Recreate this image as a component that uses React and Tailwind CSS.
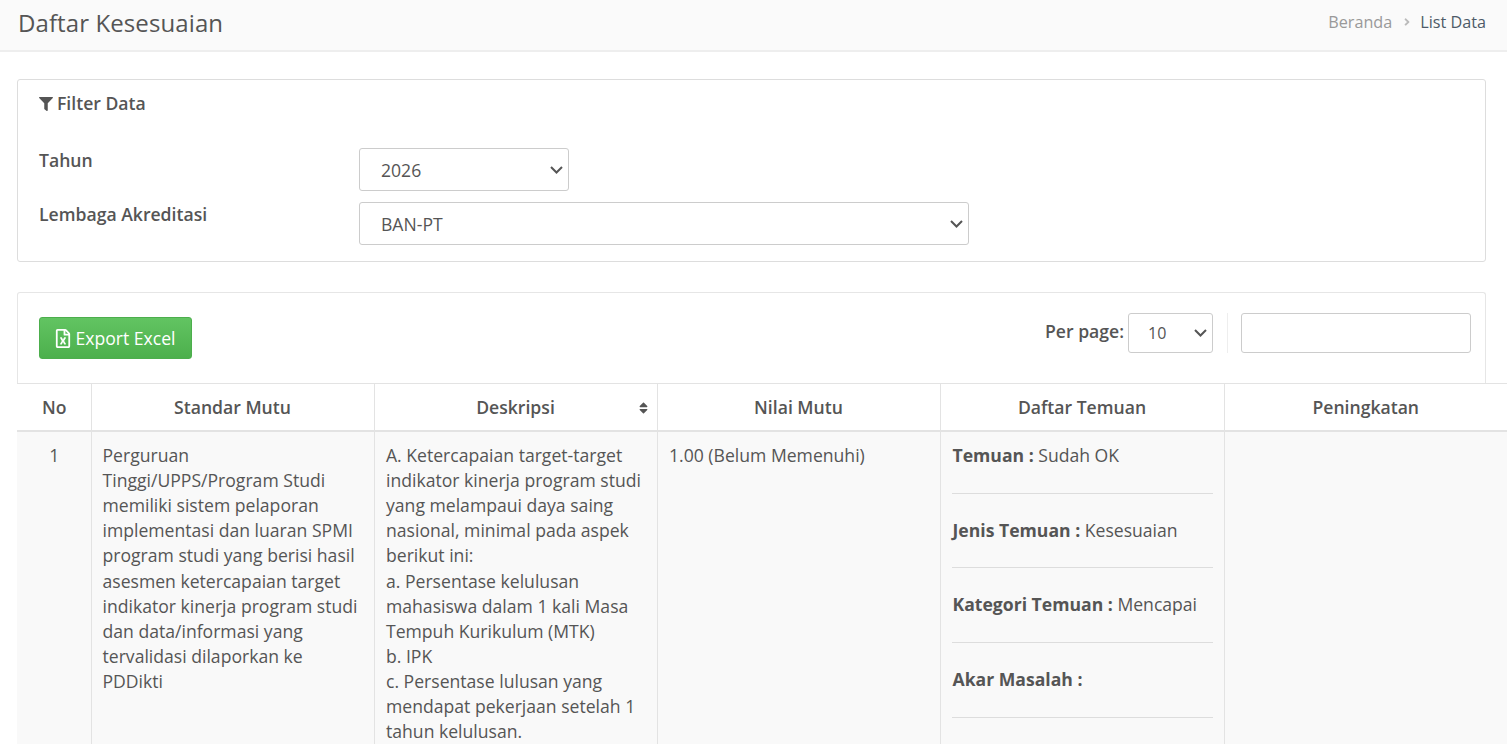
import React from "react";
import { FaFilter, FaRegFileExcel, FaSort, FaAngleRight } from "react-icons/fa";

function Hr() {
  return <div className="-mx-[1px] mt-[24.6px] mb-[23.96px] h-px bg-[#dddddd]" />;
}

function Chevron({ right }) {
  return (
    <svg viewBox="0 0 13 8" style={{ right }} className="pointer-events-none absolute top-1/2 h-[8px] w-[13px] -translate-y-1/2 text-[#555555]" fill="none" stroke="currentColor" strokeWidth="2">
      <path d="M1 1l5.5 5.5L12 1" />
    </svg>
  );
}

function Select({ w, h = "h-[43px]", pad, size, value, right = 6 }) {
  return (
    <div className={`relative ${w} ${h}`}>
      <select className={`h-full w-full appearance-none rounded-[3px] border border-[#cccccc] bg-white font-normal leading-none outline-none ${pad} ${size}`}>
        <option>{value}</option>
      </select>
      <Chevron right={right} />
    </div>
  );
}

export default function App() {
  return (
    <div className="h-screen w-full overflow-hidden bg-white font-['Open_Sans',sans-serif] text-[17.6px] leading-[25.14px] text-[#555555]">
      <header className="flex h-[52px] items-center justify-between border-b-2 border-[#eeeeee] bg-[#fafafa] pl-[18px] pr-[21px]">
        <h1 className="pb-[4px] text-[24px] leading-[30px] font-normal tracking-[0.1px]">Daftar Kesesuaian</h1>
        <nav className="flex items-center pb-[5px] text-[16.2px]">
          <span className="text-[#999999]">Beranda</span>
          <FaAngleRight className="ml-[9px] mr-[7px] size-[12px] text-[#bbbbbb]" />
          <span className="text-[#4d5a68]">List Data</span>
        </nav>
      </header>

      <main className="pl-[17px] pr-[21px] pt-[27px]">
        <section className="h-[183px] rounded-[3px] border border-[#dddddd] pl-[21px] pr-[16px] pt-[11px]">
          <div className="flex items-center gap-[4px] font-semibold">
            <FaFilter className="size-[14px]" />
            <span>Filter Data</span>
          </div>
          <div className="mt-[32px] grid grid-cols-[320px_1fr] gap-y-[11px] font-semibold">
            <label className="h-[43px]">Tahun</label>
            <Select w="w-[210px]" pad="pl-[21px] pt-[2px]" size="text-[17.6px]" value="2026" />
            <label className="h-[43px]">Lembaga Akreditasi</label>
            <Select w="w-[610px]" pad="pl-[21px] pt-[2px]" size="text-[17.6px]" value="BAN-PT" />
          </div>
        </section>

        <section className="mt-[30px] flex h-[91px] justify-between rounded-t-[3px] border border-b-0 border-[#e6e6e6] pl-[21px] pr-[14px]">
          <button className="mt-[24px] flex h-[42px] w-[153px] items-center justify-center gap-[4px] rounded-[3px] border border-[#4cae4c] bg-gradient-to-b from-[#62c462] to-[#4cb04c] pt-[1px] text-white">
            <FaRegFileExcel className="h-[19px] w-[16px]" />
            Export Excel
          </button>
          <div className="mt-[20px] flex h-[40px] items-start">
            <span className="mr-[4px] pt-[6px] font-semibold">Per page:</span>
            <Select w="w-[85px]" h="h-[40px]" pad="pl-[19px]" size="text-[16px]" value="10" />
            <div className="ml-[14px] mr-[13px] h-[40px] w-px bg-[#eeeeee]" />
            <input className="h-[40px] w-[230px] rounded-[3px] border border-[#cccccc] bg-white" />
          </div>
        </section>
      </main>

      <table className="ml-[17px] w-[1490px] table-fixed border-collapse">
        <colgroup>
          <col className="w-[74px]" />
          <col className="w-[283px]" />
          <col className="w-[283px]" />
          <col className="w-[283px]" />
          <col className="w-[284px]" />
          <col className="w-[283px]" />
        </colgroup>
        <thead>
          <tr className="h-[47px] border-t border-b-2 border-[#e3e3e3]">
            <th className="border-r border-[#e3e3e3] pt-[1px] pl-[1px] font-semibold">No</th>
            <th className="border-r border-[#e3e3e3] pt-[1px] font-semibold">Standar Mutu</th>
            <th className="relative border-r border-[#e3e3e3] pt-[1px] font-semibold">
              Deskripsi
              <FaSort className="absolute right-[8px] top-[17px] h-[14px] w-[11px]" />
            </th>
            <th className="border-r border-[#e3e3e3] pt-[1px] font-semibold">Nilai Mutu</th>
            <th className="border-r border-[#e3e3e3] pt-[1px] font-semibold">Daftar Temuan</th>
            <th className="pt-[1px] font-semibold">Peningkatan</th>
          </tr>
        </thead>
        <tbody>
          <tr className="bg-[#f9f9f9] align-top">
            <td className="border-r border-[#e3e3e3] pl-[1px] pt-[11px] text-center">1</td>
            <td className="border-r border-[#e3e3e3] px-[11px] pt-[11.3px]">
              Perguruan Tinggi/UPPS/Program Studi memiliki sistem pelaporan implementasi dan luaran SPMI program studi yang berisi hasil asesmen ketercapaian target indikator kinerja program studi dan data/informasi yang tervalidasi dilaporkan ke PDDikti
            </td>
            <td className="border-r border-[#e3e3e3] px-[11.5px] pt-[11.3px]">
              A. Ketercapaian target-target indikator kinerja program studi yang melampaui daya saing nasional, minimal pada aspek berikut ini:
              <br />
              a. Persentase kelulusan mahasiswa dalam 1 kali Masa Tempuh Kurikulum (MTK)
              <br />
              b. IPK
              <br />
              c. Persentase lulusan yang mendapat pekerjaan setelah 1 tahun kelulusan.
            </td>
            <td className="border-r border-[#e3e3e3] px-[11.5px] pt-[11px]">1.00 (Belum Memenuhi)</td>
            <td className="border-r border-[#e3e3e3] px-[12px] pt-[11.5px]">
              <div><b className="font-bold">Temuan :</b> Sudah OK</div>
              <Hr />
              <div><b className="font-bold">Jenis Temuan :</b> Kesesuaian</div>
              <Hr />
              <div><b className="font-bold">Kategori Temuan :</b> Mencapai</div>
              <Hr />
              <div><b className="font-bold">Akar Masalah :</b></div>
              <Hr />
            </td>
            <td />
          </tr>
        </tbody>
      </table>
    </div>
  );
}
